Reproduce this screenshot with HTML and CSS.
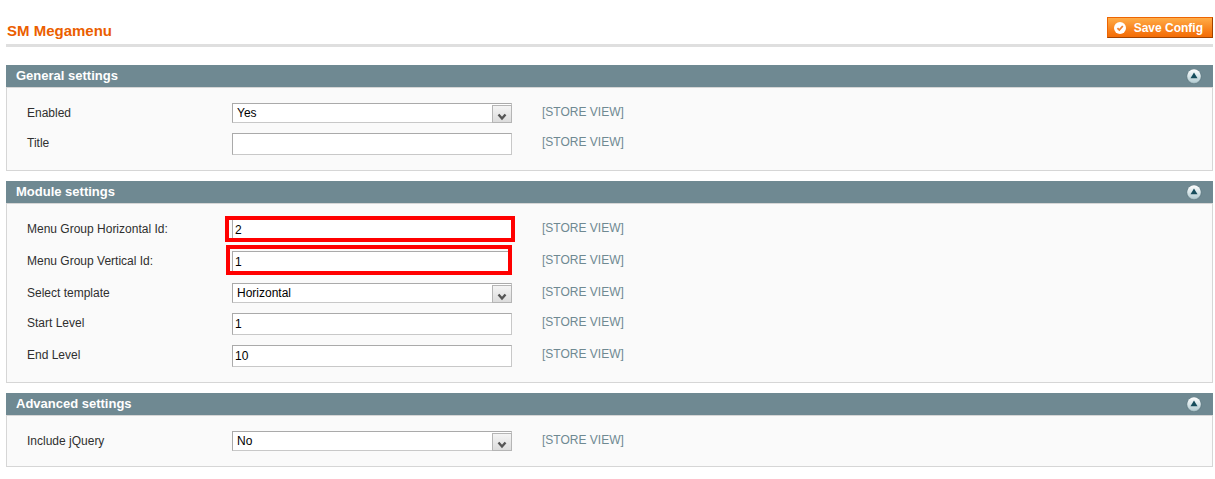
FILE: index.html
```html
<!DOCTYPE html>
<html lang="en">
<head>
    <meta charset="UTF-8">
    <meta name="viewport" content="width=device-width, initial-scale=1.0">
    <title>SM Megamenu</title>
    <link rel="stylesheet" href="styles.css">
</head>
<body>
    <!-- Shared icon for the section toggles -->
    <svg class="icon-defs" width="0" height="0" aria-hidden="true">
        <defs>
            <linearGradient id="knob" x1="0" y1="0" x2="0" y2="1">
                <stop offset="0" stop-color="#ffffff"/>
                <stop offset="1" stop-color="#b4cdd3"/>
            </linearGradient>
            <symbol id="collapse" viewBox="0 0 16 16">
                <circle cx="8" cy="8.6" r="7.2" fill="#9fb5bb" stroke="#536f77" stroke-width="0.5"/>
                <circle cx="8" cy="8" r="6.7" fill="url(#knob)"/>
                <path d="M8 4.6 L11.5 10.2 H4.5 Z" fill="#174d5c"/>
            </symbol>
        </defs>
    </svg>

    <form class="config">
        <header class="content-header">
            <h1>SM Megamenu</h1>
            <button type="button" class="save">
                <svg width="12" height="12" viewBox="0 0 12 12" aria-hidden="true">
                    <circle cx="6" cy="6" r="6" fill="#fff"/>
                    <path d="M3.4 6.2 L5.3 8 L8.8 4" fill="none" stroke="#f08030" stroke-width="1.8"/>
                </svg>
                Save Config
            </button>
        </header>

        <!-- General settings -->
        <section class="section">
            <div class="section-head">
                <h2>General settings</h2>
                <button type="button" class="toggle" aria-label="Collapse General settings"><svg width="16" height="16"><use href="#collapse"/></svg></button>
            </div>
            <div class="section-body">
                <div class="row">
                    <label for="enabled">Enabled</label>
                    <div class="field">
                        <select id="enabled">
                            <option selected>Yes</option>
                            <option>No</option>
                        </select>
                    </div>
                    <span class="scope">[STORE VIEW]</span>
                </div>
                <div class="row">
                    <label for="title">Title</label>
                    <div class="field"><input type="text" id="title"></div>
                    <span class="scope">[STORE VIEW]</span>
                </div>
            </div>
        </section>

        <!-- Module settings -->
        <section class="section">
            <div class="section-head">
                <h2>Module settings</h2>
                <button type="button" class="toggle" aria-label="Collapse Module settings"><svg width="16" height="16"><use href="#collapse"/></svg></button>
            </div>
            <div class="section-body">
                <div class="row">
                    <label for="horizontalId">Menu Group Horizontal Id:</label>
                    <div class="field marked marked-horizontal"><input type="text" id="horizontalId" value="2"></div>
                    <span class="scope">[STORE VIEW]</span>
                </div>
                <div class="row">
                    <label for="verticalId">Menu Group Vertical Id:</label>
                    <div class="field marked marked-vertical"><input type="text" id="verticalId" value="1"></div>
                    <span class="scope">[STORE VIEW]</span>
                </div>
                <div class="row">
                    <label for="template">Select template</label>
                    <div class="field">
                        <select id="template">
                            <option selected>Horizontal</option>
                            <option>Vertical</option>
                        </select>
                    </div>
                    <span class="scope">[STORE VIEW]</span>
                </div>
                <div class="row">
                    <label for="startLevel">Start Level</label>
                    <div class="field"><input type="text" id="startLevel" value="1"></div>
                    <span class="scope">[STORE VIEW]</span>
                </div>
                <div class="row">
                    <label for="endLevel">End Level</label>
                    <div class="field"><input type="text" id="endLevel" value="10"></div>
                    <span class="scope">[STORE VIEW]</span>
                </div>
            </div>
        </section>

        <!-- Advanced settings -->
        <section class="section">
            <div class="section-head">
                <h2>Advanced settings</h2>
                <button type="button" class="toggle" aria-label="Collapse Advanced settings"><svg width="16" height="16"><use href="#collapse"/></svg></button>
            </div>
            <div class="section-body">
                <div class="row">
                    <label for="jquery">Include jQuery</label>
                    <div class="field">
                        <select id="jquery">
                            <option>Yes</option>
                            <option selected>No</option>
                        </select>
                    </div>
                    <span class="scope">[STORE VIEW]</span>
                </div>
            </div>
        </section>
    </form>
</body>
</html>
```
FILE: styles.css
```css
*, *::after {
    box-sizing: border-box;
}

body {
    margin: 0;
    background-color: #fff;
    color: #2f2f2f;
    font-family: "Liberation Sans", Arial, sans-serif;
    font-size: 12px;
}

h1, h2 {
    margin: 0;
}

button, input, select {
    font-family: inherit;
}

.icon-defs {
    position: absolute;
}

.config {
    padding: 17px 2px 12px 6px;
}

.content-header {
    display: flex;
    justify-content: space-between;
    align-items: flex-start;
    padding-bottom: 6px;
    margin-bottom: 18px;
    border-bottom: 3px solid #dfdfdf;
}

.content-header h1 {
    padding: 4px 0 0 1px;
    color: #eb5e00;
    font-size: 15px;
    line-height: 20px;
    height: 21px;
}

.save {
    display: flex;
    align-items: center;
    gap: 8px;
    height: 21px;
    padding: 0 9px 0 6px;
    border: 1px solid;
    border-color: #ed6502 #a04300 #a04300 #ed6502;
    background: linear-gradient(#ffac47, #f77c16 70%, #f36c06);
    color: #fff;
    font-size: 12px;
    font-weight: bold;
    cursor: pointer;
}

.section {
    margin-bottom: 10px;
}

.section-head {
    display: flex;
    justify-content: space-between;
    align-items: center;
    height: 22px;
    padding: 0 11px 0 10px;
    background-color: #6f8992;
}

.section-head h2 {
    color: #fff;
    font-size: 13px;
    line-height: 22px;
}

.toggle {
    display: flex;
    padding: 0;
    border: none;
    background: none;
    cursor: pointer;
}

.section-body {
    display: flex;
    flex-direction: column;
    gap: 10px;
    padding: 15px 20px;
    border: 1px solid #d6d6d6;
    background-color: #fafafa;
}

.row {
    display: flex;
    align-items: flex-start;
}

.row label {
    width: 205px;
    line-height: 20px;
}

.field {
    position: relative;
    width: 280px;
    margin-right: 30px;
}

.field input, .field select {
    display: block;
    width: 100%;
    border: 1px solid;
    border-color: #aaa #c8c8c8 #c8c8c8 #aaa;
    border-radius: 0;
    background-color: #fff;
    color: #000;
    font-size: 12px;
}

.field input {
    height: 22px;
    padding: 0 2px;
}

.field select {
    appearance: none;
    height: 20px;
    padding: 0 22px 0 4px;
}

/* Drop-down arrow button */
.field:has(select)::after {
    content: "";
    position: absolute;
    top: 2px;
    right: 0;
    width: 20px;
    height: 18px;
    border: 1px solid #b5b5b5;
    background: url("data:image/svg+xml,%3Csvg xmlns='http://www.w3.org/2000/svg' width='10' height='8'%3E%3Cpath d='M1.5 1.5 L5 5.5 L8.5 1.5' fill='none' stroke='%23555' stroke-width='2.4'/%3E%3C/svg%3E") center 7px no-repeat, linear-gradient(#f4f4f4, #dcdcdc);
    pointer-events: none;
}

/* Red frame over the id fields */
.marked::after {
    content: "";
    position: absolute;
    border: 4px solid #f00;
    pointer-events: none;
}

.marked-horizontal::after {
    inset: -3px -3px -1px -7px;
}

.marked-vertical::after {
    inset: -6px 0 -2px -6px;
}

.scope {
    color: #6f8992;
    line-height: 18px;
}
```
